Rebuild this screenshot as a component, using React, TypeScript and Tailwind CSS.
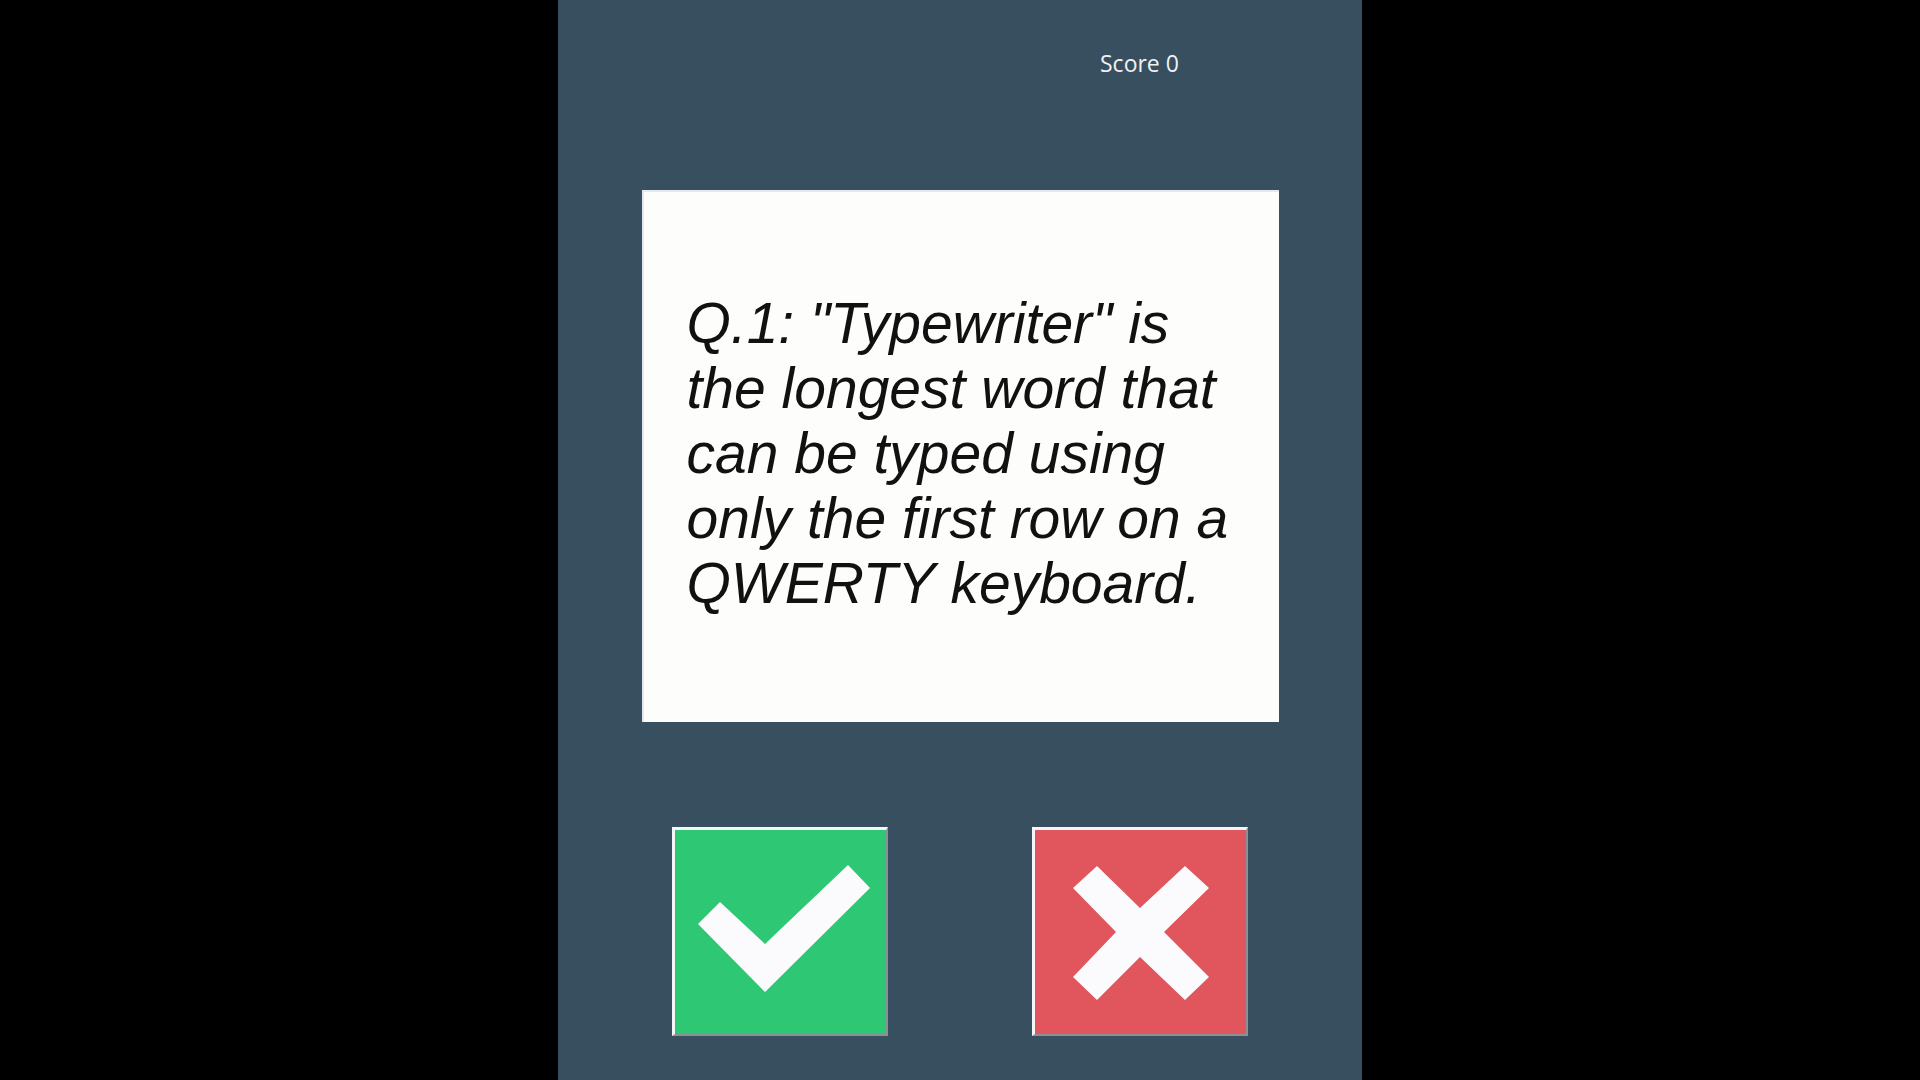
export default function App() {
  return (
    <div className="flex h-[1080px] w-full justify-center bg-black">
      <div className="flex h-full w-[804px] flex-col bg-[#384f5f]">
        <div className="pl-[542px] pt-[48px]">
          <span className="text-[23px] font-medium leading-[30px] text-[#eef2f6] font-['Open_Sans',sans-serif]">
            Score 0
          </span>
        </div>

        <div className="mx-auto mt-[112px] flex h-[532px] w-[637px] items-center border-t-2 border-l-2 border-[#e6e8ef] bg-[#fdfdfb] px-[43px] pb-[8px]">
          <p className="text-[57px] italic leading-[65px] text-[#111111] font-['Liberation_Sans',Arial,sans-serif]">
            Q.1: "Typewriter" is the longest word that can be typed using only the first row on a QWERTY keyboard.
          </p>
        </div>

        <div className="mt-[105px] flex justify-center gap-[144px]">
          <button className="h-[209px] w-[216px] border-t-[3px] border-l-[3px] border-r-2 border-b-2 border-t-[#f4f6fa] border-l-[#f4f6fa] border-r-[#8c9096] border-b-[#8c9096] bg-[#2ec874]">
            <svg viewBox="0 0 211 204" className="h-full w-full">
              <polygon points="45,72 23,94 90,162 195,58 173,35 90,114" fill="#fbfbfd" />
            </svg>
          </button>
          <button className="h-[209px] w-[216px] border-t-[3px] border-l-[3px] border-r-2 border-b-2 border-t-[#f4f6fa] border-l-[#f4f6fa] border-r-[#8c9096] border-b-[#8c9096] bg-[#e1555c]">
            <svg viewBox="0 0 211 204" className="h-full w-full">
              <polygon
                points="62,36 38,58 81,102 38,147 62,170 105,127 150,170 174,147 129,102 174,58 150,36 105,78"
                fill="#fbfbfd"
              />
            </svg>
          </button>
        </div>
      </div>
    </div>
  );
}
